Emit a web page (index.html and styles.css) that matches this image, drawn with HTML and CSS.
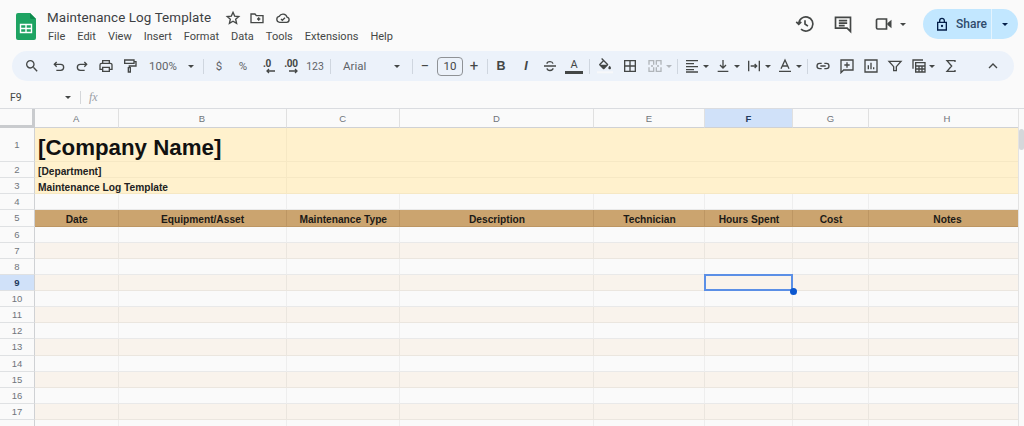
FILE: index.html
```html
<!DOCTYPE html>
<html lang="en">
<head>
<meta charset="utf-8">
<title>Maintenance Log Template</title>
<link rel="stylesheet" href="styles.css">
</head>
<body>
<header class="titlebar">
  <svg class="logo" viewBox="0 0 20 27"><path d="M2 0h12l6 6v19a2 2 0 0 1-2 2H2a2 2 0 0 1-2-2V2a2 2 0 0 1 2-2z" fill="#1ea362"/><path d="M14 0l6 6h-4.500a1.500 1.500 0 0 1-1.500-1.500z" fill="#0c8a4c"/><path d="M4.500 11.500h11v8h-11zM10 11.500v8M4.500 15.500h11" fill="none" stroke="#fff" stroke-width="1.400"/></svg>
  <div class="docinfo">
    <div class="docname">
      <span class="doctitle">Maintenance Log Template</span>
      <svg class="ic16 star" viewBox="0 0 24 24"><path d="M12 3.500l2.500 5.700 6.200.6-4.700 4.100 1.400 6.100-5.400-3.200-5.400 3.200 1.400-6.100-4.700-4.100 6.200-.6z" class="ln"/></svg>
      <svg class="ic16 folder" viewBox="0 0 24 24"><path d="M3 6h6l2 2.500h10V19H3zM12 13.500h5M14.500 11v5" class="ln"/></svg>
      <svg class="ic16 cloud" viewBox="0 0 24 24"><path d="M7 18.500a4.500 4.500 0 0 1-.7-8.900 6.300 6.300 0 0 1 11.700 1 4 4 0 0 1-.5 7.900zM9 13.500l2 2 4-4" class="ln"/></svg>
    </div>
    <nav class="menu"><span>File</span><span>Edit</span><span>View</span><span>Insert</span><span>Format</span><span>Data</span><span>Tools</span><span>Extensions</span><span>Help</span></nav>
  </div>
  <div class="actions">
    <svg class="ic22 hist" viewBox="0 0 24 24"><path d="M4.500 12a8.500 8.500 0 1 1 2.700 6.200M12 7.500V12l3.500 2.500M1.500 9.500l3 3 3-3" class="ln"/></svg>
    <svg class="ic22 cmt" viewBox="0 0 24 24"><path d="M3 4h18v17l-4-4H3zM7 8h10M7 11h10M7 14h7" class="ln"/></svg>
    <svg class="ic22 vid" viewBox="0 0 24 24"><path d="M3 7.500a1.500 1.500 0 0 1 1.500-1.500H15v12H4.500A1.500 1.500 0 0 1 3 16.500z" class="ln"/><path d="M16 11l5-4v10l-5-4z" fill="#444746"/></svg>
    <span class="caret vcaret"></span>
    <div class="share">
      <div class="share-main">
        <svg class="ic16" viewBox="0 0 24 24"><path d="M5.500 9.500h13V21h-13zM8.500 9.500V7a3.500 3.500 0 0 1 7 0v2.500" class="ln dark"/><circle cx="12" cy="15" r="1.700" fill="#041e49"/></svg>
        <span>Share</span>
      </div>
      <div class="share-more"><span class="caret dark"></span></div>
    </div>
  </div>
</header>

<div class="toolbar">
  <span class="tool"><svg viewBox="0 0 24 24"><path d="M15.500 14h-.79l-.28-.27A6.471 6.471 0 0 0 16 9.500 6.500 6.500 0 1 0 9.500 16c1.610 0 3.090-.59 4.230-1.570l.27.28v.79l5 4.990L20.490 19l-4.990-5zm-6 0C7.010 14 5 11.990 5 9.500S7.010 5 9.500 5 14 7.010 14 9.500 11.990 14 9.500 14z" fill="#444746"/></svg></span>
  <span class="tool nudge3"><svg viewBox="0 0 24 24"><path d="M8.500 6L5 9.500 8.500 13M5 9.500h9.500a4.500 4.500 0 0 1 0 9H8" class="ln"/></svg></span>
  <span class="tool back1"><svg viewBox="0 0 24 24"><path d="M15.500 6L19 9.500 15.500 13M19 9.500H9.500a4.500 4.500 0 0 0 0 9H16" class="ln"/></svg></span>
  <span class="tool"><svg viewBox="0 0 24 24"><path d="M7 8V4h10v4M6.500 17H3v-6.500A2.500 2.500 0 0 1 5.500 8h13a2.500 2.500 0 0 1 2.500 2.500V17h-3.500M7 14h10v6H7z" class="ln"/></svg></span>
  <span class="tool"><svg viewBox="0 0 24 24"><path d="M4 3h14v5H4zM18 5.500h3v6.500H11v2.500M9.500 14.500h3V21h-3z" class="ln"/></svg></span>
  <span class="zoomval">100%</span><span class="caret zoomcaret"></span>
  <i class="sep sep-a"></i>
  <span class="tool txt">$</span>
  <span class="tool txt">%</span>
  <span class="tool dec"><b>.0</b><svg viewBox="0 0 12 6"><path d="M11 3H3M5 1L3 3l2 2" class="ln thin"/></svg></span>
  <span class="tool dec"><b>.00</b><svg viewBox="0 0 12 6"><path d="M1 3h8M7 1l2 2-2 2" class="ln thin"/></svg></span>
  <span class="tool txt small">123</span>
  <i class="sep sep-b"></i>
  <span class="fontname">Arial</span><span class="caret fontcaret"></span>
  <i class="sep sep-c"></i>
  <span class="tool sym">−</span>
  <span class="sizebox">10</span>
  <span class="tool sym">+</span>
  <i class="sep sep-d"></i>
  <span class="tool bold">B</span>
  <span class="tool bold ital nudge1">I</span>
  <span class="tool"><svg viewBox="0 0 24 24"><path d="M3 12h18M16.500 8.500C16 6.500 14.500 5.500 12 5.500S7.500 6.800 7.500 8.500M7.500 15.500c.4 2 2 3.200 4.500 3.200s4.500-1.200 4.500-3.200" class="ln"/></svg></span>
  <span class="tool fontcolor"><em>A</em><i></i></span>
  <i class="sep sep-e"></i>
  <span class="tool"><svg viewBox="0 0 24 24"><path d="M16.560 8.940L7.620 0 6.210 1.410l2.380 2.380-5.150 5.150c-.59.59-.59 1.540 0 2.120l5.500 5.500c.29.29.68.44 1.060.44s.77-.15 1.060-.44l5.500-5.500c.59-.58.59-1.530 0-2.120zM5.210 10L10 5.210 14.790 10H5.210zM19 11.500s-2 2.170-2 3.500c0 1.100.9 2 2 2s2-.9 2-2c0-1.330-2-3.500-2-3.500z" fill="#444746"/><path d="M0 21.500h24" stroke="#f7f8fa" stroke-width="3"/></svg></span>
  <span class="tool nudge1"><svg viewBox="0 0 24 24"><path d="M4 4h16v16H4zM12 4v16M4 12h16" class="ln"/></svg></span>
  <span class="tool dim nudge1"><svg viewBox="0 0 24 24"><path d="M3 10V4h7v6M14 10V4h7v6M3 14v6h7v-6M14 14v6h7v-6M6 12h3M15 12h3" class="ln"/></svg></span>
  <span class="caret dimcaret"></span>
  <i class="sep sep-f"></i>
  <span class="tool"><svg viewBox="0 0 24 24"><path d="M3 4h18M3 8.500h12M3 13h18M3 17.500h12M3 21h18" class="ln"/></svg></span><span class="caret tcaret"></span>
  <span class="tool"><svg viewBox="0 0 24 24"><path d="M12 3v12M7.500 10.500L12 15l4.500-4.500M4 20h16" class="ln"/></svg></span><span class="caret tcaret"></span>
  <span class="tool"><svg viewBox="0 0 24 24"><path d="M4 4v16M20 4v16M7 12h9M13 9l3 3-3 3" class="ln"/></svg></span><span class="caret tcaret"></span>
  <span class="tool"><svg viewBox="0 0 24 24"><path d="M6 16L12 3l6 13M8 12h8M3 20h18" class="ln"/></svg></span><span class="caret tcaret"></span>
  <i class="sep sep-g"></i>
  <span class="tool"><svg viewBox="0 0 24 24"><path d="M10 8H7a4 4 0 0 0 0 8h3M14 8h3a4 4 0 0 1 0 8h-3M8 12h8" class="ln"/></svg></span>
  <span class="tool"><svg viewBox="0 0 24 24"><path d="M3 3h18v15H7l-4 4zM12 6.500v8M8 10.500h8" class="ln"/></svg></span>
  <span class="tool"><svg viewBox="0 0 24 24"><path d="M3 3h18v18H3zM8 11v6M12 7v10M16 14v3" class="ln"/></svg></span>
  <span class="tool"><svg viewBox="0 0 24 24"><path d="M3 5h18l-7 8v6h-4v-6z" class="ln"/></svg></span>
  <span class="tool"><svg viewBox="0 0 24 24"><path d="M3 16V3h15M7 7h14v14H7zM7 12h14M7 16.500h14M12 12v9M16.500 12v9" class="ln"/></svg></span><span class="caret fcaret"></span>
  <span class="tool sigmat"><svg viewBox="0 0 24 24"><path d="M18 6V4H6l7 8-7 8h12v-2" class="ln"/></svg></span>
  <span class="tool collapse"><svg viewBox="0 0 24 24"><path d="M6 15l6-6 6 6" class="ln"/></svg></span>
</div>

<div class="formula">
  <span class="namebox">F9</span><span class="caret namecaret"></span>
  <i class="fsep"></i>
  <span class="fx">fx</span>
</div>

<main class="sheet">
  <div class="row hdr">
    <div class="corner"></div><div class="ch">A</div><div class="ch">B</div><div class="ch">C</div><div class="ch">D</div><div class="ch">E</div><div class="ch on">F</div><div class="ch">G</div><div class="ch">H</div>
  </div>
  <div class="row r1 title"><div class="rh">1</div><div class="c span2 big">[Company Name]</div><div class="c span6"></div></div>
  <div class="row title"><div class="rh">2</div><div class="c span2 sub">[Department]</div><div class="c span6"></div></div>
  <div class="row title"><div class="rh">3</div><div class="c span2 sub">Maintenance Log Template</div><div class="c span6"></div></div>
  <div class="row"><div class="rh">4</div><div class="c"></div><div class="c"></div><div class="c"></div><div class="c"></div><div class="c"></div><div class="c"></div><div class="c"></div><div class="c"></div></div>
  <div class="row head"><div class="rh">5</div><div class="c">Date</div><div class="c">Equipment/Asset</div><div class="c">Maintenance Type</div><div class="c">Description</div><div class="c">Technician</div><div class="c">Hours Spent</div><div class="c">Cost</div><div class="c">Notes</div></div>
  <div class="row"><div class="rh">6</div><div class="c"></div><div class="c"></div><div class="c"></div><div class="c"></div><div class="c"></div><div class="c"></div><div class="c"></div><div class="c"></div></div>
  <div class="row alt"><div class="rh">7</div><div class="c"></div><div class="c"></div><div class="c"></div><div class="c"></div><div class="c"></div><div class="c"></div><div class="c"></div><div class="c"></div></div>
  <div class="row"><div class="rh">8</div><div class="c"></div><div class="c"></div><div class="c"></div><div class="c"></div><div class="c"></div><div class="c"></div><div class="c"></div><div class="c"></div></div>
  <div class="row alt"><div class="rh on">9</div><div class="c"></div><div class="c"></div><div class="c"></div><div class="c"></div><div class="c"></div><div class="c sel"><span class="handle"></span></div><div class="c"></div><div class="c"></div></div>
  <div class="row"><div class="rh">10</div><div class="c"></div><div class="c"></div><div class="c"></div><div class="c"></div><div class="c"></div><div class="c"></div><div class="c"></div><div class="c"></div></div>
  <div class="row alt"><div class="rh">11</div><div class="c"></div><div class="c"></div><div class="c"></div><div class="c"></div><div class="c"></div><div class="c"></div><div class="c"></div><div class="c"></div></div>
  <div class="row"><div class="rh">12</div><div class="c"></div><div class="c"></div><div class="c"></div><div class="c"></div><div class="c"></div><div class="c"></div><div class="c"></div><div class="c"></div></div>
  <div class="row alt"><div class="rh">13</div><div class="c"></div><div class="c"></div><div class="c"></div><div class="c"></div><div class="c"></div><div class="c"></div><div class="c"></div><div class="c"></div></div>
  <div class="row"><div class="rh">14</div><div class="c"></div><div class="c"></div><div class="c"></div><div class="c"></div><div class="c"></div><div class="c"></div><div class="c"></div><div class="c"></div></div>
  <div class="row alt"><div class="rh">15</div><div class="c"></div><div class="c"></div><div class="c"></div><div class="c"></div><div class="c"></div><div class="c"></div><div class="c"></div><div class="c"></div></div>
  <div class="row"><div class="rh">16</div><div class="c"></div><div class="c"></div><div class="c"></div><div class="c"></div><div class="c"></div><div class="c"></div><div class="c"></div><div class="c"></div></div>
  <div class="row alt"><div class="rh">17</div><div class="c"></div><div class="c"></div><div class="c"></div><div class="c"></div><div class="c"></div><div class="c"></div><div class="c"></div><div class="c"></div></div>
  <div class="row tail"><div class="rh"></div><div class="c"></div><div class="c"></div><div class="c"></div><div class="c"></div><div class="c"></div><div class="c"></div><div class="c"></div><div class="c"></div></div>
  <div class="track"><span class="thumb"></span></div>
</main>
</body>
</html>
```
FILE: styles.css
```css
* { box-sizing: border-box; }
html, body { margin: 0; height: 426px; overflow: hidden; }
body { background: #fafafa; font-family: Roboto, "Liberation Sans", sans-serif; color: #444746; width: 1024px; }

.ln { fill: none; stroke: #444746; stroke-width: 2; }
.ln.dark { stroke: #041e49; }
.ln.thin { stroke-width: 1.3; }
.caret { display: inline-block; width: 0; height: 0; border-left: 3.5px solid transparent; border-right: 3.5px solid transparent; border-top: 3.5px solid #444746; flex: none; }
.caret.dark { border-top-color: #041e49; }

/* title bar */
.titlebar { height: 51px; display: flex; align-items: flex-start; padding-left: 16px; }
.logo { width: 20px; height: 27px; margin-top: 13px; flex: none; }
.docinfo { margin-left: 11px; padding-top: 8px; }
.docname { display: flex; align-items: center; height: 19px; }
.doctitle { font-size: 13.400px; color: #3c4043; letter-spacing: .1px; width: 177px; white-space: nowrap; }
.ic16 { width: 16px; height: 16px; flex: none; }
.star { margin-left: 1px; }
.folder { margin-left: 8px; }
.cloud { margin-left: 10px; }
.menu { display: flex; margin-top: 1px; font-size: 11px; color: #444746; margin-left: 1px; height: 16px; align-items: center; gap: 12px; }
.actions { margin-left: auto; display: flex; align-items: center; height: 30px; margin-top: 9px; margin-right: 6px; }
.ic22 { width: 20px; height: 20px; flex: none; }
.cmt { margin-left: 18px; }
.vid { margin-left: 21px; }
.vcaret { margin-left: 6px; }
.share { margin-left: 17px; width: 95px; height: 30px; border-radius: 15px; background: #c2e7ff; display: flex; }
.share-main { width: 69px; padding-left: 11px; display: flex; align-items: center; gap: 6px; font-size: 12px; font-weight: 500; color: #2f4b6c; border-right: 1px solid #e4f3fd; }
.share-more { flex: 1; display: flex; align-items: center; justify-content: center; }

/* toolbar */
.toolbar { margin: 0 10px 0 12px; height: 30px; border-radius: 15px; background: #ecf2fa; display: flex; align-items: center; padding-left: 8px; }
.tool { width: 24px; height: 24px; flex: none; display: flex; align-items: center; justify-content: center; font-size: 11px; color: #5f6368; }
.tool svg { width: 16px; height: 16px; }
.nudge3 { margin-left: 3px; }
.nudge1 { margin-left: 1px; }
.back1 { margin-left: -1px; }
.txt { font-size: 11.500px; }
.txt.small { font-size: 10.500px; }
.dec { flex-direction: column; font-size: 10px; line-height: 9px; color: #444746; }
.dec b { font-weight: 700; letter-spacing: -.3px; }
.tool.dec svg { width: 12px; height: 6px; margin-left: 6px; }
.zoomval { margin-left: 7px; width: 36px; font-size: 11.500px; color: #5f6368; }
.zoomcaret { margin-left: 3px; }
.sep { width: 1px; height: 15px; background: #cfd6df; flex: none; display: block; }
.sep-a { margin: 0 3px 0 9px; }
.sep-b { margin: 0 12px 0 3px; }
.fontname { width: 51px; font-size: 11.500px; color: #5f6368; }
.sep-c { margin: 0 0 0 12px; }
.sizebox { width: 26px; height: 19px; border: 1px solid #8f9296; border-radius: 4px; font-size: 11.500px; display: flex; align-items: center; justify-content: center; margin: 0 -1px 0 0; }
.sym { font-size: 15px; color: #444746; }
.sep-d { margin: 0 1px 0 1px; }
.bold { font-weight: 700; font-size: 12.500px; color: #444746; font-family: "Liberation Sans", sans-serif; }
.ital { font-style: italic; }
.fontcolor { flex-direction: column; }
.fontcolor em { font-style: normal; font-size: 11px; line-height: 11px; color: #444746; }
.fontcolor i { display: block; width: 18px; height: 3px; background: #444746; margin-top: 1px; }
.sep-e { margin: 0 3px 0 3px; }
.dim { opacity: .35; }
.dimcaret { opacity: .35; margin-left: -1px; }
.sep-f { margin: 0 2px 0 5px; }
.tcaret { margin: 0 2px 0 -1px; }
.sep-g { margin: 0 3px 0 3px; }
.fcaret { margin-left: -2px; }
.sigmat { margin-left: 4px; }
.collapse { margin-left: 18px; }

/* formula */
.formula { height: 28px; display: flex; align-items: center; padding: 6px 0 0 10px; border-bottom: 1px solid #dadce0; font-size: 10.500px; color: #444746; }
.namebox { width: 55px; }
.namecaret { border-left-width: 3px; border-right-width: 3px; border-top-width: 3px; }
.fsep { width: 1px; height: 13px; background: #d5d7da; display: block; margin-left: 9px; }
.fx { font-family: "Liberation Serif", serif; font-style: italic; font-size: 12px; color: #9aa0a6; margin-left: 8px; }

/* sheet */
.sheet { position: relative; }
.row { display: grid; grid-template-columns: 35px 83.500px 168px 113.500px 194px 111px 88px 76px 157px; height: 16.140px; width: 1026px; }
.hdr { height: 19px; background: #fafafa; }
.ch { border-right: 1px solid #e0e0e0; border-bottom: 1px solid #cfd1d4; font-size: 9.500px; color: #70757a; display: flex; align-items: center; justify-content: center; font-family: "Liberation Sans", sans-serif; }
.ch.on { background: #d0e1f9; font-weight: 700; color: #1f3a5f; }
.corner { border-right: 3px solid #c9cbce; border-bottom: 3px solid #c9cbce; }
.rh { border-right: 1px solid #cfd1d4; border-bottom: 1px solid #dfe1e3; font-size: 9.500px; color: #70757a; display: flex; align-items: center; justify-content: center; font-family: "Liberation Sans", sans-serif; background: #fafafa; }
.rh.on { background: #d0e1f9; font-weight: 700; color: #1f3a5f; }
.c { border-right: 1px solid #eeeeee; border-bottom: 1px solid #e9e9e9; font-family: "Liberation Sans", sans-serif; display: flex; align-items: center; min-width: 0; white-space: nowrap; }
.r1 { height: 34px; }
.title .c { background: #fff1cd; border-color: #f6e8c4; }
.span2 { grid-column: span 2; padding-left: 3px; font-weight: 700; color: #111; }
.span6 { grid-column: span 6; }
.big { font-size: 22.300px; padding-top: 7px; }
.sub { font-size: 10.200px; color: #222; padding-top: 3px; }
.head .c { background: #cba46f; border-color: #bd9663; font-weight: 700; font-size: 10.200px; color: #1c1a17; justify-content: center; padding: 3px 0 0 1px; }
.alt .c { background: #f9f3ec; border-color: #ebe6df; }
.sel { position: relative; overflow: visible; }
.sel::after { content: ""; position: absolute; left: -1px; right: -1px; top: -1px; bottom: -1px; border: 2px solid #5b8fe6; }
.handle { position: absolute; right: -5px; bottom: -5px; width: 7px; height: 7px; border-radius: 50%; background: #0b57d0; z-index: 2; }
.track { position: absolute; left: 1018px; top: 0; width: 6px; height: 317px; background: #fafafa; border-left: 1px solid #e3e3e3; }
.thumb { position: absolute; left: 0; top: 20px; width: 5px; height: 21px; border-radius: 3px; background: #d5d7da; }
```
